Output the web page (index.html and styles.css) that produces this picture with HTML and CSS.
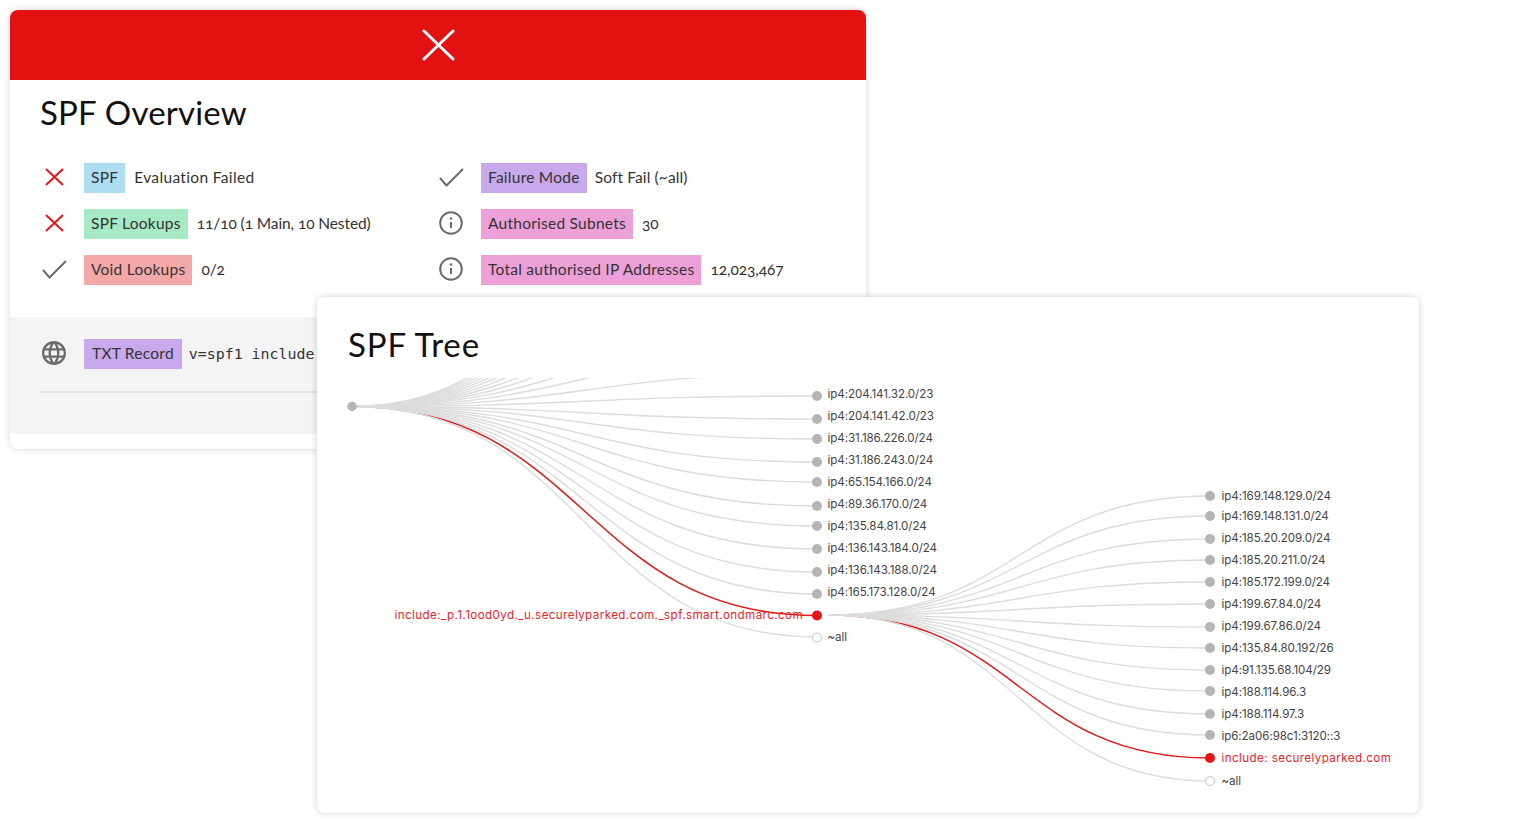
FILE: index.html
```html
<!DOCTYPE html>
<html lang="en">
<head>
  <meta charset="UTF-8">
  <meta name="viewport" content="width=device-width, initial-scale=1.0">
  <title>SPF Overview</title>
  <link rel="stylesheet" href="styles.css">
</head>
<body>

<div class="stage">

  <div class="overview-card">
    <div class="overview-header">
      <svg width="34" height="34" viewBox="0 0 34 34"><path class="x-white" d="M3 3L32 31M32 3L3 31"/></svg>
    </div>
    <h1 class="card-title">SPF Overview</h1>

    <div class="stats">
      <div class="stat">
        <svg class="stat-icon" viewBox="0 0 28 28"><path class="x-red" d="M6 6L23 22M23 6L6 22"/></svg>
        <span class="tag tag-blue">SPF</span>
        <span class="stat-value">Evaluation Failed</span>
      </div>
      <div class="stat">
        <svg class="stat-icon" viewBox="0 0 28 28"><path class="tick" d="M3 15L9.5 22.5L26 6"/></svg>
        <span class="tag tag-purple">Failure Mode</span>
        <span class="stat-value stat-tight">Soft Fail (~all)</span>
      </div>
      <div class="stat">
        <svg class="stat-icon" viewBox="0 0 28 28"><path class="x-red" d="M6 6L23 22M23 6L6 22"/></svg>
        <span class="tag tag-green">SPF Lookups</span>
        <span class="stat-value stat-number">11/10 (1 Main, 10 Nested)</span>
      </div>
      <div class="stat">
        <svg class="stat-icon" viewBox="0 0 28 28"><circle class="info" cx="14" cy="14" r="10.8"/><path class="info" d="M14 13V19"/><circle class="info-dot" cx="14" cy="9.5" r="1.3"/></svg>
        <span class="tag tag-pink">Authorised Subnets</span>
        <span class="stat-value stat-number">30</span>
      </div>
      <div class="stat">
        <svg class="stat-icon" viewBox="0 0 28 28"><path class="tick" d="M3 15L9.5 22.5L26 6"/></svg>
        <span class="tag tag-red">Void Lookups</span>
        <span class="stat-value stat-number">0/2</span>
      </div>
      <div class="stat">
        <svg class="stat-icon" viewBox="0 0 28 28"><circle class="info" cx="14" cy="14" r="10.8"/><path class="info" d="M14 13V19"/><circle class="info-dot" cx="14" cy="9.5" r="1.3"/></svg>
        <span class="tag tag-pink">Total authorised IP Addresses</span>
        <span class="stat-value stat-number">12,023,467</span>
      </div>
    </div>

    <div class="record-band">
      <div class="record-row">
        <svg class="stat-icon" viewBox="0.33 0.33 23.33 23.33"><path class="globe" d="M11.99 2C6.47 2 2 6.48 2 12s4.47 10 9.99 10C17.52 22 22 17.52 22 12S17.52 2 11.99 2zm6.93 6h-2.95c-.32-1.25-.78-2.45-1.38-3.56 1.84.63 3.37 1.91 4.33 3.56zM12 4.04c.83 1.2 1.48 2.53 1.91 3.96h-3.82c.43-1.43 1.08-2.76 1.91-3.96zM4.26 14C4.1 13.36 4 12.69 4 12s.1-1.36.26-2h3.38c-.08.66-.14 1.32-.14 2 0 .68.06 1.34.14 2H4.26zm.82 2h2.95c.32 1.25.78 2.45 1.38 3.56-1.84-.63-3.37-1.9-4.33-3.56zm2.95-8H5.08c.96-1.66 2.49-2.93 4.33-3.56C8.81 5.55 8.35 6.75 8.03 8zM12 19.96c-.83-1.2-1.48-2.53-1.91-3.96h3.82c-.43 1.43-1.08 2.76-1.91 3.96zM14.34 14H9.66c-.09-.66-.16-1.32-.16-2 0-.68.07-1.35.16-2h4.68c.09.65.16 1.32.16 2 0 .68-.07 1.34-.16 2zm.25 5.56c.6-1.11 1.06-2.31 1.38-3.56h2.95c-.96 1.65-2.49 2.93-4.33 3.56zM16.36 14c.08-.66.14-1.32.14-2 0-.68-.06-1.34-.14-2h3.38c.16.64.26 1.31.26 2s-.1 1.36-.26 2h-3.38z"/></svg>
        <span class="tag tag-purple tag-wide">TXT Record</span>
        <span class="record-value">v=spf1 include</span>
      </div>
    </div>
  </div>

  <div class="tree-card">
    <h2 class="card-title tree-title">SPF Tree</h2>
    <svg class="tree" viewBox="317 378 1102 435" width="1102" height="435">
      <g class="links-red">
        <path d="M352 406.5C584.5 406.5 584.5 615.5 817 615.5"/>
        <path d="M828 615C1019 615 1019 758 1210 758"/>
      </g>
      <g class="links">
        <path d="M352 406.5C584.5 406.5 584.5 131 817 131"/>
        <path d="M352 406.5C584.5 406.5 584.5 153 817 153"/>
        <path d="M352 406.5C584.5 406.5 584.5 175 817 175"/>
        <path d="M352 406.5C584.5 406.5 584.5 197 817 197"/>
        <path d="M352 406.5C584.5 406.5 584.5 219 817 219"/>
        <path d="M352 406.5C584.5 406.5 584.5 241 817 241"/>
        <path d="M352 406.5C584.5 406.5 584.5 263 817 263"/>
        <path d="M352 406.5C584.5 406.5 584.5 285 817 285"/>
        <path d="M352 406.5C584.5 406.5 584.5 307 817 307"/>
        <path d="M352 406.5C584.5 406.5 584.5 329 817 329"/>
        <path d="M352 406.5C584.5 406.5 584.5 351 817 351"/>
        <path d="M352 406.5C584.5 406.5 584.5 374 817 374"/>
        <path d="M352 406.5C584.5 406.5 584.5 396 817 396"/>
        <path d="M352 406.5C584.5 406.5 584.5 419 817 419"/>
        <path d="M352 406.5C584.5 406.5 584.5 439 817 439"/>
        <path d="M352 406.5C584.5 406.5 584.5 462 817 462"/>
        <path d="M352 406.5C584.5 406.5 584.5 482 817 482"/>
        <path d="M352 406.5C584.5 406.5 584.5 506 817 506"/>
        <path d="M352 406.5C584.5 406.5 584.5 526 817 526"/>
        <path d="M352 406.5C584.5 406.5 584.5 549 817 549"/>
        <path d="M352 406.5C584.5 406.5 584.5 572 817 572"/>
        <path d="M352 406.5C584.5 406.5 584.5 594 817 594"/>
        <path d="M352 406.5C584.5 406.5 584.5 637 817 637"/>
        <path d="M828 615C1019 615 1019 496 1210 496"/>
        <path d="M828 615C1019 615 1019 516 1210 516"/>
        <path d="M828 615C1019 615 1019 539 1210 539"/>
        <path d="M828 615C1019 615 1019 560 1210 560"/>
        <path d="M828 615C1019 615 1019 582 1210 582"/>
        <path d="M828 615C1019 615 1019 604 1210 604"/>
        <path d="M828 615C1019 615 1019 627 1210 627"/>
        <path d="M828 615C1019 615 1019 648 1210 648"/>
        <path d="M828 615C1019 615 1019 670 1210 670"/>
        <path d="M828 615C1019 615 1019 691 1210 691"/>
        <path d="M828 615C1019 615 1019 714 1210 714"/>
        <path d="M828 615C1019 615 1019 735 1210 735"/>
        <path d="M828 615C1019 615 1019 781 1210 781"/>
      </g>

      <g class="nodes">
        <circle cx="352" cy="406.5" r="4.7"/>
        <circle cx="817" cy="373" r="5"/>
        <circle cx="817" cy="396" r="5"/>
        <circle cx="817" cy="419" r="5"/>
        <circle cx="817" cy="439" r="5"/>
        <circle cx="817" cy="462" r="5"/>
        <circle cx="817" cy="482" r="5"/>
        <circle cx="817" cy="506" r="5"/>
        <circle cx="817" cy="526" r="5"/>
        <circle cx="817" cy="549" r="5"/>
        <circle cx="817" cy="572" r="5"/>
        <circle cx="817" cy="594" r="5"/>
        <circle cx="1210" cy="496" r="5"/>
        <circle cx="1210" cy="516" r="5"/>
        <circle cx="1210" cy="539" r="5"/>
        <circle cx="1210" cy="560" r="5"/>
        <circle cx="1210" cy="582" r="5"/>
        <circle cx="1210" cy="604" r="5"/>
        <circle cx="1210" cy="627" r="5"/>
        <circle cx="1210" cy="648" r="5"/>
        <circle cx="1210" cy="670" r="5"/>
        <circle cx="1210" cy="691" r="5"/>
        <circle cx="1210" cy="714" r="5"/>
        <circle cx="1210" cy="735" r="5"/>
      </g>
      <circle class="node-red" cx="817" cy="615.5" r="5"/>
      <circle class="node-red" cx="1210" cy="758" r="5"/>
      <circle class="node-empty" cx="817" cy="637.5" r="4.5"/>
      <circle class="node-empty" cx="1210" cy="781" r="4.5"/>

      <g class="labels">
        <text x="827.5" y="398">ip4:204.141.32.0/23</text>
        <text x="827.5" y="420">ip4:204.141.42.0/23</text>
        <text x="827.5" y="442">ip4:31.186.226.0/24</text>
        <text x="827.5" y="464">ip4:31.186.243.0/24</text>
        <text x="827.5" y="486">ip4:65.154.166.0/24</text>
        <text x="827.5" y="508">ip4:89.36.170.0/24</text>
        <text x="827.5" y="530">ip4:135.84.81.0/24</text>
        <text x="827.5" y="552">ip4:136.143.184.0/24</text>
        <text x="827.5" y="574">ip4:136.143.188.0/24</text>
        <text x="827.5" y="596">ip4:165.173.128.0/24</text>
        <text x="827.5" y="641">~all</text>
        <text x="1221.5" y="500">ip4:169.148.129.0/24</text>
        <text x="1221.5" y="520">ip4:169.148.131.0/24</text>
        <text x="1221.5" y="542">ip4:185.20.209.0/24</text>
        <text x="1221.5" y="564">ip4:185.20.211.0/24</text>
        <text x="1221.5" y="586">ip4:185.172.199.0/24</text>
        <text x="1221.5" y="608">ip4:199.67.84.0/24</text>
        <text x="1221.5" y="630">ip4:199.67.86.0/24</text>
        <text x="1221.5" y="652">ip4:135.84.80.192/26</text>
        <text x="1221.5" y="674">ip4:91.135.68.104/29</text>
        <text x="1221.5" y="696">ip4:188.114.96.3</text>
        <text x="1221.5" y="718">ip4:188.114.97.3</text>
        <text x="1221.5" y="740">ip6:2a06:98c1:3120::3</text>
        <text x="1221.5" y="785">~all</text>
      </g>
      <g class="labels labels-red">
        <text x="803" y="619" text-anchor="end">include:_p.1.1ood0yd._u.securelyparked.com._spf.smart.ondmarc.com</text>
        <text x="1221.5" y="762">include: securelyparked.com</text>
      </g>
    </svg>
  </div>

</div>

</body>
</html>
```

FILE: styles.css
```css
body {
  font-family: "Lato", "Liberation Sans", sans-serif;
  margin: 0;
  padding: 0;
  background-color: #fff;
  overflow: hidden;
}

.stage {
  position: relative;
  height: 822px;
  padding: 10px 0 0 10px;
  box-sizing: border-box;
}

.card-title {
  margin: 0;
  font-size: 33px;
  line-height: 40px;
  font-weight: 400;
  color: #111;
  letter-spacing: .2px;
}

.overview-card {
  width: 856px;
  height: 439px;
  background-color: #fff;
  border-radius: 8px;
  box-shadow: 0 0 6px 1px rgba(0, 0, 0, 0.12);
  overflow: hidden;
}

.overview-header {
  height: 70px;
  background-color: #e21212;
  display: flex;
  align-items: center;
  justify-content: center;
}

.overview-card .card-title {
  padding: 12px 30px 0;
}

.x-white {
  fill: none;
  stroke: #fff;
  stroke-width: 3;
  stroke-linecap: round;
}

.x-red {
  fill: none;
  stroke: #e61717;
  stroke-width: 2;
}

.tick {
  fill: none;
  stroke: #6b6b6b;
  stroke-width: 2;
}

.info {
  fill: none;
  stroke: #6b6b6b;
  stroke-width: 2;
}

.info-dot,
.globe {
  fill: #6b6b6b;
}

.stats {
  display: grid;
  grid-template-columns: 397px 1fr;
  row-gap: 16px;
  padding: 31px 30px 32px;
}

.stat,
.record-row {
  display: flex;
  align-items: center;
  height: 30px;
}

.stat-icon {
  width: 28px;
  height: 28px;
  margin-right: 16px;
  margin-top: -2px;
  flex-shrink: 0;
}

.tag {
  height: 30px;
  line-height: 28px;
  padding: 0 7px;
  font-size: 15.5px;
  letter-spacing: .25px;
  color: #333;
  white-space: nowrap;
}

.tag-wide {
  padding: 0 8px;
}

.tag-blue { background-color: #aedcf0; }
.tag-green { background-color: #a6e9c4; }
.tag-red { background-color: #f4a9a9; }
.tag-purple { background-color: #c7a9ec; }
.tag-pink { background-color: #eda0d8; }

.stat-value {
  margin: -2px 0 0 9px;
  font-size: 15.5px;
  letter-spacing: .35px;
  color: #333;
  white-space: nowrap;
}

.stat-tight {
  margin-left: 8px;
  letter-spacing: .12px;
}

.stat-number {
  font-variant-numeric: oldstyle-nums;
  letter-spacing: -.1px;
}

.record-band {
  height: 117px;
  padding: 22px 30px 0;
  box-sizing: border-box;
  background-color: #f4f4f4;
}

.record-row {
  padding-bottom: 22px;
  border-bottom: 2px solid #e4e4e4;
  box-sizing: content-box;
}

.record-value {
  margin-left: 7px;
  font-family: "DejaVu Sans Mono", monospace;
  font-size: 14.9px;
  color: #333;
  white-space: nowrap;
}

/* sits over the right end of the overview card */
.tree-card {
  position: absolute;
  left: 317px;
  top: 297px;
  width: 1102px;
  height: 516px;
  background-color: #fff;
  border-radius: 8px;
  box-shadow: 0 0 6px 1px rgba(0, 0, 0, 0.14);
}

.tree-title {
  padding: 27px 31px 0;
  height: 54px;
  letter-spacing: .85px;
}

.tree {
  display: block;
}

.links path {
  fill: none;
  stroke: #dcdcdc;
  stroke-width: 1.4;
}

.links-red path {
  fill: none;
  stroke: #e61717;
  stroke-width: 1.5;
}

.nodes circle {
  fill: #b5b5b5;
}

.node-red {
  fill: #e61414;
}

.node-empty {
  fill: #fff;
  stroke: #c4c4c4;
  stroke-width: 1;
}

.labels text {
  font-family: "Inter", "Liberation Sans", sans-serif;
  font-size: 11.6px;
  letter-spacing: -.08px;
  fill: #444;
}

.labels-red text {
  fill: #e8262a;
  letter-spacing: .42px;
}
```
